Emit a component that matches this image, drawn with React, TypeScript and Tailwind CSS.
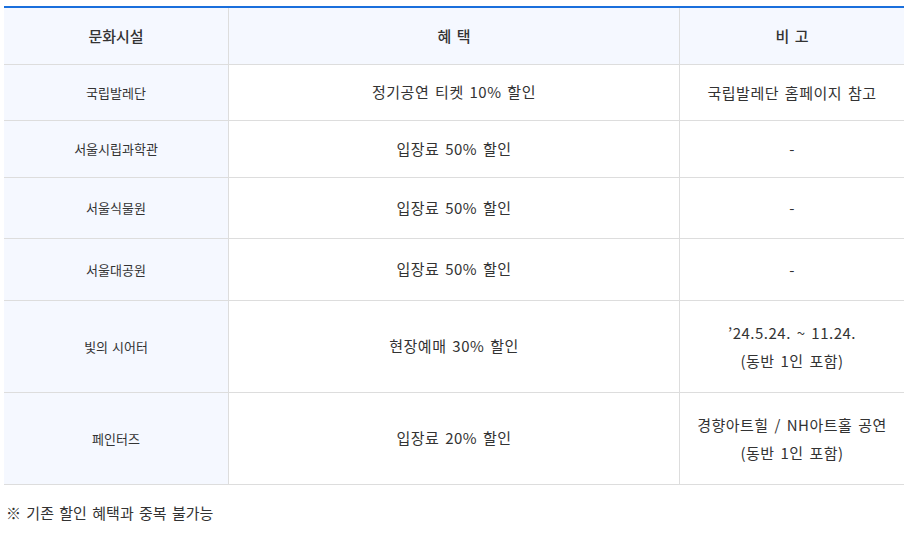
import React from 'react';

type Row = { place: string; benefit: string; note: string[]; h: string };

const rows: Row[] = [
  { place: '국립발레단', benefit: '정기공연 티켓 10% 할인', note: ['국립발레단 홈페이지 참고'], h: 'h-[56px]' },
  { place: '서울시립과학관', benefit: '입장료 50% 할인', note: ['-'], h: 'h-[57px]' },
  { place: '서울식물원', benefit: '입장료 50% 할인', note: ['-'], h: 'h-[61px]' },
  { place: '서울대공원', benefit: '입장료 50% 할인', note: ['-'], h: 'h-[62px]' },
  { place: '빛의 시어터', benefit: '현장예매 30% 할인', note: ['’24.5.24. ~ 11.24.', '(동반 1인 포함)'], h: 'h-[92px]' },
  { place: '페인터즈', benefit: '입장료 20% 할인', note: ['경향아트힐 / NH아트홀 공연', '(동반 1인 포함)'], h: 'h-[92px]' },
];

const App: React.FC = () => {
  return (
    <div className="w-[911px] h-[533px] bg-white pt-[6px] pl-[4px] text-[#333] [font-family:'Noto_Sans_CJK_KR','Noto_Sans',sans-serif]">
      <div className="w-[900px] border-t-2 border-[#1a6fdc]">
        <div className="grid grid-cols-[225px_451px_224px] h-[57px] bg-[#f5f8ff] border-b border-[#dddddd] text-[15px] font-medium">
          <div className="flex items-center justify-center border-r border-[#dddddd]">문화시설</div>
          <div className="flex items-center justify-center border-r border-[#dddddd] [word-spacing:2px]">혜 택</div>
          <div className="flex items-center justify-center [word-spacing:2px]">비 고</div>
        </div>
        {rows.map(row => (
          <div key={row.place} className={`grid grid-cols-[225px_451px_224px] border-b border-[#dddddd] ${row.h}`}>
            <div className="flex items-center justify-center bg-[#f5f8ff] border-r border-[#dddddd] text-[13px] [word-spacing:1px]">{row.place}</div>
            <div className="flex items-center justify-center border-r border-[#dddddd] text-[15px] tracking-[0.5px] [word-spacing:2px]">{row.benefit}</div>
            <div className="flex flex-col items-center justify-center text-[15px] leading-[28px] tracking-[0.5px] [word-spacing:2px]">
              {row.note.map(line => (
                <span key={line}>{line}</span>
              ))}
            </div>
          </div>
        ))}
      </div>
      <p className="mt-[17px] ml-[2px] text-[15px] [word-spacing:2px]">※ 기존 할인 혜택과 중복 불가능</p>
    </div>
  );
};

export default App;
